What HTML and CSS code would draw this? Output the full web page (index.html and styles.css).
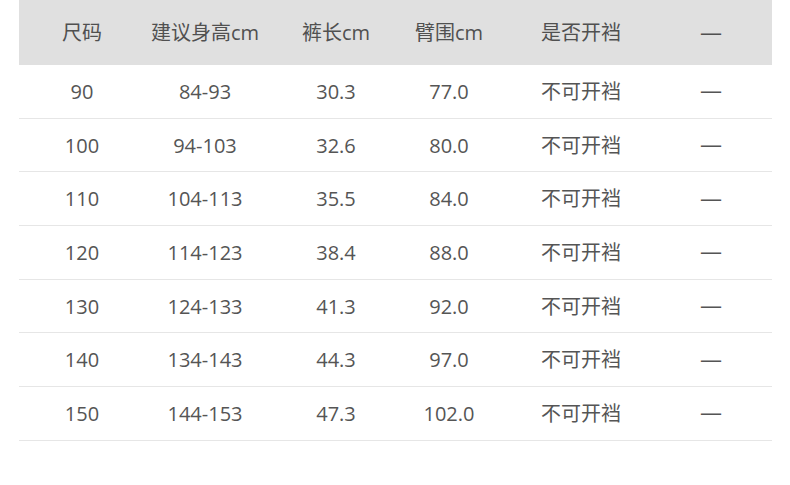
FILE: index.html
```html
<!DOCTYPE html>
<html lang="zh">
<head>
<meta charset="utf-8">
<link rel="stylesheet" href="styles.css">
</head>
<body>
<div class="table">
  <div class="row head">
    <div>尺码</div><div>建议身高cm</div><div>裤长cm</div><div>臂围cm</div><div>是否开裆</div><div class="dash">—</div>
  </div>
  <div class="row"><div>90</div><div>84-93</div><div>30.3</div><div>77.0</div><div>不可开裆</div><div class="dash">—</div></div>
  <div class="row"><div>100</div><div>94-103</div><div>32.6</div><div>80.0</div><div>不可开裆</div><div class="dash">—</div></div>
  <div class="row"><div>110</div><div>104-113</div><div>35.5</div><div>84.0</div><div>不可开裆</div><div class="dash">—</div></div>
  <div class="row"><div>120</div><div>114-123</div><div>38.4</div><div>88.0</div><div>不可开裆</div><div class="dash">—</div></div>
  <div class="row"><div>130</div><div>124-133</div><div>41.3</div><div>92.0</div><div>不可开裆</div><div class="dash">—</div></div>
  <div class="row"><div>140</div><div>134-143</div><div>44.3</div><div>97.0</div><div>不可开裆</div><div class="dash">—</div></div>
  <div class="row"><div>150</div><div>144-153</div><div>47.3</div><div>102.0</div><div>不可开裆</div><div class="dash">—</div></div>
</div>
</body>
</html>
```
FILE: styles.css
```css
html, body {
  margin: 0;
  padding: 0;
  background: #ffffff;
}
body {
  padding: 0 18px 0 19px;
  font-family: "Open Sans", "Noto Sans CJK SC", sans-serif;
  color: #555555;
  font-size: 20px;
}
.table {
  width: 753px;
}
.row {
  display: grid;
  grid-template-columns: 126px 120px 142px 84px 180px 80px 21px;
  align-items: center;
  height: 53.7px;
  box-sizing: border-box;
  border-bottom: 1px solid #e6e6e6;
  padding-top: 1px;
}
.row > div {
  text-align: center;
  line-height: 1;
  white-space: nowrap;
}
.row > .dash {
  font-size: 22px;
  margin-bottom: 5px;
}
.row.head {
  height: 65px;
  background: #e0e0e0;
  border-bottom: none;
  color: #505050;
}
```
